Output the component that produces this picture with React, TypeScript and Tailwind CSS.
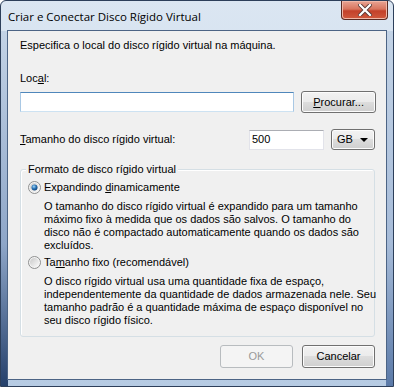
import React from "react";

const font = { fontFamily: '"Liberation Sans", Arial, sans-serif' };

const Radio = ({ checked }: { checked?: boolean }) => (
  <svg width="13" height="13" viewBox="0 0 13 13" className="shrink-0">
    <defs>
      <linearGradient id={checked ? "rbg1" : "rbg2"} x1="0" y1="0" x2="1" y2="1">
        <stop offset="0" stopColor="#c9c9c9" />
        <stop offset="1" stopColor="#fbfbfb" />
      </linearGradient>
      <radialGradient id="dot" cx="0.4" cy="0.35" r="0.7">
        <stop offset="0" stopColor="#a6d7f4" />
        <stop offset="0.5" stopColor="#2b75b8" />
        <stop offset="1" stopColor="#0c3e73" />
      </radialGradient>
    </defs>
    <circle cx="6.5" cy="6.5" r="6" fill="#f4f4f4" stroke="#8e8f8f" strokeWidth="1" />
    <circle cx="6.5" cy="6.5" r="4.5" fill={`url(#${checked ? "rbg1" : "rbg2"})`} />
    {checked && <circle cx="6.5" cy="6.5" r="3" fill="url(#dot)" />}
  </svg>
);

const Button = ({ children, disabled }: { children: React.ReactNode; disabled?: boolean }) => (
  <div
    className={`w-[73px] h-[23px] rounded-[3px] border flex items-center justify-center ${
      disabled
        ? "border-[#b8bcbf] bg-[#f4f4f4] text-[#9a9a9a]"
        : "border-[#707070] bg-[linear-gradient(#f2f2f2_0%,#ebebeb_49%,#dddddd_50%,#cfcfcf_100%)] text-black shadow-[inset_0_0_0_1px_#fcfcfc]"
    }`}>
    {children}
  </div>
);

export default function App() {
  return (
    <div style={font} className="w-[394px] h-[387px] relative overflow-hidden rounded-t-[6px] border border-[#2d3f5a] bg-[linear-gradient(180deg,#dbe6f2_0%,#cfdded_40%,#b6cbe3_100%)]">
      {/* frame edge shading */}
      <div className="absolute left-0 top-[30px] bottom-0 w-[7px] bg-[linear-gradient(180deg,#c3d3e6_0%,#8ea6c8_60%,#25406b_100%)]" />
      <div className="absolute right-0 top-[30px] bottom-0 w-[7px] bg-[linear-gradient(180deg,#c3d3e6_0%,#a6bbd8_60%,#5b7aa8_100%)]" />

      {/* title bar */}
      <div className="relative h-[29px] flex items-start justify-between">
        <div className="pl-[7px] pt-[7px] text-[11.5px] text-black" style={{ fontFamily: '"Open Sans", "Noto Sans", sans-serif' }}>
          Criar e Conectar Disco Rígido Virtual
        </div>
        <div className="mr-[5px] w-[47px] h-[19px] rounded-b-[4px] border border-t-0 border-[#5a2a22] bg-[linear-gradient(180deg,#e8a493_0%,#d8755e_45%,#c3412a_55%,#d0593d_100%)] flex items-center justify-center shadow-[inset_0_0_0_1px_#f0b8a8]">
          <svg width="14" height="12" viewBox="0 0 14 12">
            <path d="M2 1 L12 11 M12 1 L2 11" stroke="#5b3a36" strokeWidth="4" strokeLinecap="square" />
            <path d="M2 1 L12 11 M12 1 L2 11" stroke="#ffffff" strokeWidth="2.2" strokeLinecap="square" />
          </svg>
        </div>
      </div>

      {/* client area */}
      <div className="relative mx-[6px] h-[350px] border border-[#4c6485] bg-[#f0f0f0] text-[11px] leading-[13px] text-black">
        <div className="pl-[12px] pr-[10px]">
          <div className="pt-[8px]">Especifica o local do disco rígido virtual na máquina.</div>
          <div className="mt-[20px]">
            Loc<span className="underline">a</span>l:
          </div>
          <div className="mt-[6px] flex items-center">
            <div className="w-[275px] h-[20px] bg-white border border-[#a9c8e4] border-t-[#4f87bb] border-b-[#cde2f2]" />
            <div className="ml-[7px] w-[75px] h-[22px] rounded-[3px] border border-[#707070] bg-[linear-gradient(#f2f2f2_0%,#ebebeb_49%,#dddddd_50%,#cfcfcf_100%)] shadow-[inset_0_0_0_1px_#fcfcfc] flex items-center justify-center">
              <span>
                <span className="underline">P</span>rocurar...
              </span>
            </div>
          </div>
          <div className="mt-[16px] flex items-center h-[21px]">
            <div className="flex-1">
              <span className="underline">T</span>amanho do disco rígido virtual:
            </div>
            <div className="w-[75px] h-[20px] bg-white border border-[#e2e3ea] border-t-[#abadb3] pl-[2px] flex items-center">500</div>
            <div className="ml-[7px] mr-[1px] w-[44px] h-[21px] rounded-[3px] border border-[#707070] bg-[linear-gradient(#f2f2f2_0%,#ebebeb_49%,#dddddd_50%,#cfcfcf_100%)] shadow-[inset_0_0_0_1px_#fcfcfc] flex items-center justify-between pl-[5px] pr-[6px]">
              <span>GB</span>
              <svg width="8" height="4" viewBox="0 0 8 4">
                <path d="M0 0 H8 L4 4 Z" fill="#000" />
              </svg>
            </div>
          </div>

          {/* group box */}
          <div className="relative mt-[19px] mr-[1px] h-[168px] rounded-[3px] border border-[#d5dfe5] shadow-[inset_1px_1px_0_#ffffff]">
            <span className="absolute -top-[7px] left-[5px] bg-[#f0f0f0] px-[2px]">Formato de disco rígido virtual</span>
            <div className="pl-[7px] pt-[11px]">
              <div className="flex items-center gap-[3px] h-[13px]">
                <Radio checked />
                <span>
                  Expandindo <span className="underline">d</span>inamicamente
                </span>
              </div>
              <div className="pl-[16px] mt-[6px] whitespace-nowrap">
                O tamanho do disco rígido virtual é expandido para um tamanho
                <br />
                máximo fixo à medida que os dados são salvos. O tamanho do
                <br />
                disco não é compactado automaticamente quando os dados são
                <br />
                excluídos.
              </div>
              <div className="flex items-center gap-[3px] h-[13px] mt-[4px]">
                <Radio />
                <span>
                  Ta<span className="underline">m</span>anho fixo (recomendável)
                </span>
              </div>
              <div className="pl-[16px] mt-[6px] whitespace-nowrap">
                O disco rígido virtual usa uma quantidade fixa de espaço,
                <br />
                independentemente da quantidade de dados armazenada nele. Seu
                <br />
                tamanho padrão é a quantidade máxima de espaço disponível no
                <br />
                seu disco rígido físico.
              </div>
            </div>
          </div>

          <div className="mt-[8px] flex justify-end gap-[9px] pr-[1px]">
            <Button disabled>OK</Button>
            <Button>Cancelar</Button>
          </div>
        </div>
      </div>
    </div>
  );
}
